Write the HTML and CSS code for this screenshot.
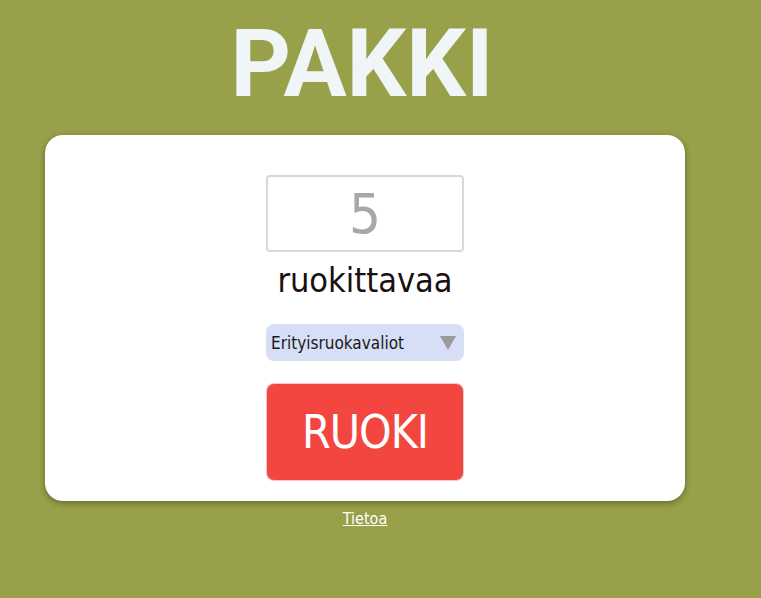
FILE: index.html
```html
<!DOCTYPE html>
<html lang="fi">
<head>
<meta charset="utf-8">
<title>Pakki</title>
<link rel="stylesheet" href="styles.css">
</head>
<body>
<div class="page">
  <h1 class="title">PAKKI</h1>
  <div class="card">
    <div class="count">5</div>
    <div class="label">ruokittavaa</div>
    <div class="select">
      <span>Erityisruokavaliot</span>
      <span class="arrow"></span>
    </div>
    <button class="go">RUOKI</button>
  </div>
  <a class="info" href="#">Tietoa</a>
</div>
</body>
</html>
```
FILE: styles.css
```css
html, body {
  margin: 0;
  padding: 0;
  background: #98a049;
}
body {
  font-family: "Liberation Sans Narrow", "DejaVu Sans Condensed", sans-serif;
}
.page {
  width: 640px;
  margin-left: 45px;
  display: flex;
  flex-direction: column;
  align-items: center;
}
.title {
  margin: 9px 6px 0 0;
  font-family: Roboto, "Liberation Sans", sans-serif;
  font-weight: 700;
  font-size: 94px;
  line-height: 111px;
  color: #f0f5f8;
}
.card {
  margin-top: 15px;
  width: 640px;
  height: 366px;
  box-sizing: border-box;
  background: #fff;
  border-radius: 18px;
  box-shadow: 0 2px 6px rgba(0,0,0,0.35);
  display: flex;
  flex-direction: column;
  align-items: center;
  padding-top: 40px;
}
.count {
  width: 198px;
  height: 77px;
  box-sizing: border-box;
  border: 2px solid #d8d8d8;
  border-radius: 4px;
  display: flex;
  align-items: center;
  justify-content: center;
  color: #a8a8a8;
  font-size: 56px;
  font-weight: 300;
}
.label {
  margin-top: 7px;
  font-size: 34px;
  line-height: 42px;
  color: #1a1010;
}
.select {
  margin-top: 23px;
  width: 198px;
  height: 37px;
  box-sizing: border-box;
  background: #d6dff5;
  border-radius: 8px;
  display: flex;
  align-items: center;
  justify-content: space-between;
  padding: 0 8px 0 5px;
  font-size: 17px;
  color: #1a1a1a;
}
.arrow {
  width: 0;
  height: 0;
  border-left: 8px solid transparent;
  border-right: 8px solid transparent;
  border-top: 14px solid #9a9a9a;
}
.go {
  margin-top: 22px;
  width: 198px;
  height: 98px;
  background: #f44641;
  border: 1px solid #f0c8c8;
  border-radius: 8px;
  color: #fff;
  font-family: inherit;
  font-size: 46px;
  letter-spacing: -1px;
  font-weight: 300;
  padding: 0;
}
.info {
  margin-top: 8px;
  color: #fff;
  font-size: 16px;
}
```
